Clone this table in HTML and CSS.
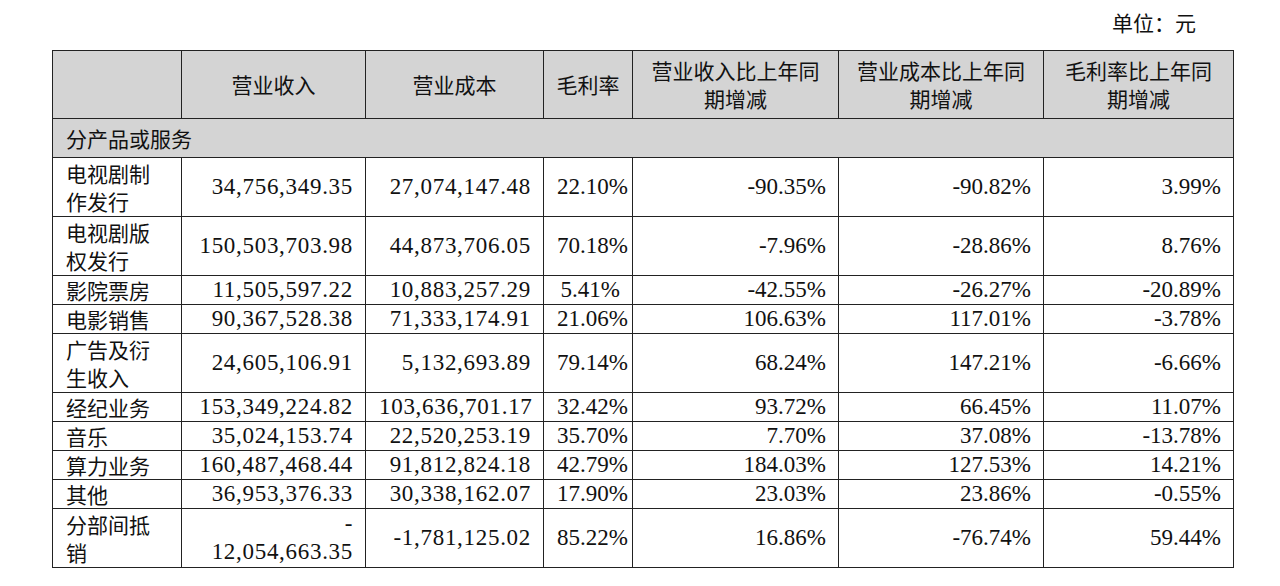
FILE: index.html
```html
<!DOCTYPE html>
<html lang="zh-CN">
<head>
<meta charset="utf-8">
<title>分产品或服务</title>
<link rel="stylesheet" href="styles.css">
</head>
<body>
<div class="page">
  <div class="unit">单位：元</div>
  <table class="report">
    <colgroup>
      <col class="c1"><col class="c2"><col class="c3"><col class="c4"><col class="c5"><col class="c6"><col class="c7">
    </colgroup>
    <thead>
      <tr>
        <th></th>
        <th>营业收入</th>
        <th>营业成本</th>
        <th>毛利率</th>
        <th>营业收入比上年同<br>期增减</th>
        <th>营业成本比上年同<br>期增减</th>
        <th>毛利率比上年同<br>期增减</th>
      </tr>
    </thead>
    <tbody>
      <tr class="section"><td colspan="7">分产品或服务</td></tr>
      <tr class="tall"><td class="name">电视剧制作发行</td><td class="num amt">34,756,349.35</td><td class="num amt">27,074,147.48</td><td class="num">22.10%</td><td class="num">-90.35%</td><td class="num">-90.82%</td><td class="num">3.99%</td></tr>
      <tr class="tall"><td class="name">电视剧版权发行</td><td class="num amt">150,503,703.98</td><td class="num amt">44,873,706.05</td><td class="num">70.18%</td><td class="num">-7.96%</td><td class="num">-28.86%</td><td class="num">8.76%</td></tr>
      <tr><td class="name">影院票房</td><td class="num amt">11,505,597.22</td><td class="num amt">10,883,257.29</td><td class="num">5.41%</td><td class="num">-42.55%</td><td class="num">-26.27%</td><td class="num">-20.89%</td></tr>
      <tr><td class="name">电影销售</td><td class="num amt">90,367,528.38</td><td class="num amt">71,333,174.91</td><td class="num">21.06%</td><td class="num">106.63%</td><td class="num">117.01%</td><td class="num">-3.78%</td></tr>
      <tr class="tall"><td class="name">广告及衍生收入</td><td class="num amt">24,605,106.91</td><td class="num amt">5,132,693.89</td><td class="num">79.14%</td><td class="num">68.24%</td><td class="num">147.21%</td><td class="num">-6.66%</td></tr>
      <tr><td class="name">经纪业务</td><td class="num amt">153,349,224.82</td><td class="num amt">103,636,701.17</td><td class="num">32.42%</td><td class="num">93.72%</td><td class="num">66.45%</td><td class="num">11.07%</td></tr>
      <tr><td class="name">音乐</td><td class="num amt">35,024,153.74</td><td class="num amt">22,520,253.19</td><td class="num">35.70%</td><td class="num">7.70%</td><td class="num">37.08%</td><td class="num">-13.78%</td></tr>
      <tr><td class="name">算力业务</td><td class="num amt">160,487,468.44</td><td class="num amt">91,812,824.18</td><td class="num">42.79%</td><td class="num">184.03%</td><td class="num">127.53%</td><td class="num">14.21%</td></tr>
      <tr><td class="name">其他</td><td class="num amt">36,953,376.33</td><td class="num amt">30,338,162.07</td><td class="num">17.90%</td><td class="num">23.03%</td><td class="num">23.86%</td><td class="num">-0.55%</td></tr>
      <tr class="tall"><td class="name">分部间抵销</td><td class="num amt">-<br>12,054,663.35</td><td class="num amt">-1,781,125.02</td><td class="num">85.22%</td><td class="num">16.86%</td><td class="num">-76.74%</td><td class="num">59.44%</td></tr>
    </tbody>
  </table>
</div>
</body>
</html>
```
FILE: styles.css
```css
html, body {
  margin: 0;
  padding: 0;
  background: #ffffff;
}

body {
  font-family: "Liberation Serif", "Noto Sans CJK SC", serif;
  color: #111;
  font-size: 21px;
}

.page {
  width: 1181px;
  margin-left: 52px;
  padding-top: 8px;
}

.unit {
  text-align: right;
  padding-right: 37px;
  line-height: 28px;
  height: 28px;
  margin-bottom: 14px;
  font-family: "Noto Sans CJK SC", sans-serif;
  font-weight: 400;
}

.report {
  width: 1181px;
  table-layout: fixed;
  border-collapse: collapse;
  border: 1.5px solid #222;
}

.c1 { width: 129px; }
.c2 { width: 184px; }
.c3 { width: 178px; }
.c4 { width: 89px; }
.c5 { width: 206px; }
.c6 { width: 205px; }
.c7 { width: 190px; }

.report th,
.report td {
  border: 1px solid #222;
  padding: 0 13px;
  line-height: 28px;
  vertical-align: middle;
}

.report th {
  background: #d4d4d4;
  font-family: "Noto Sans CJK SC", sans-serif;
  font-weight: 400;
  text-align: center;
  padding: 5px 4px 6px;
  height: 56px;
  box-sizing: content-box;
  white-space: nowrap;
}

.report .section td {
  background: #d4d4d4;
  font-family: "Noto Sans CJK SC", sans-serif;
  font-weight: 400;
  padding-top: 5px;
  padding-bottom: 5px;
}

.report td.name {
  font-family: "Noto Sans CJK SC", sans-serif;
  font-weight: 400;
  text-align: left;
}

.report td.num {
  text-align: right;
  font-size: 23px;
  padding-right: 12px;
}

.report td.amt {
  letter-spacing: 0.7px;
  padding-right: 12px;
}

.report tr.tall td {
  padding-top: 1px;
  padding-bottom: 1px;
}
```
